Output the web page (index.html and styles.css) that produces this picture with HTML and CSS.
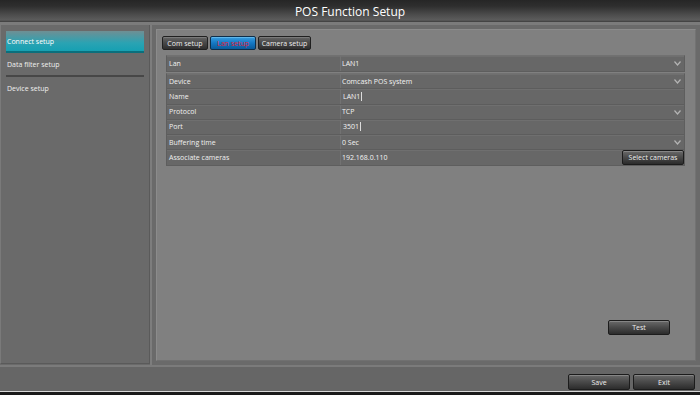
FILE: index.html
```html
<!DOCTYPE html>
<html>
<head>
<meta charset="utf-8">
<link rel="stylesheet" href="styles.css">
</head>
<body>
<div class="screen">
  <header class="titlebar">POS Function Setup</header>
  <div class="main">
    <aside class="sidebar">
      <div class="nav-item active">Connect setup</div>
      <div class="nav-item">Data filter setup</div>
      <div class="nav-sep"></div>
      <div class="nav-item">Device setup</div>
    </aside>
    <div class="divider"></div>
    <section class="panel">
      <div class="tabs">
        <div class="tab">Com setup</div>
        <div class="tab active">Lan setup</div>
        <div class="tab">Camera setup</div>
      </div>
      <div class="table table-single">
        <div class="row">
          <div class="label">Lan</div>
          <div class="value">LAN1<svg class="chev" viewBox="0 0 7 5"><path d="M0.5 0.5 L3.5 4 L6.5 0.5"/></svg></div>
        </div>
      </div>
      <div class="table">
        <div class="row">
          <div class="label">Device</div>
          <div class="value">Comcash POS system<svg class="chev" viewBox="0 0 7 5"><path d="M0.5 0.5 L3.5 4 L6.5 0.5"/></svg></div>
        </div>
        <div class="row">
          <div class="label">Name</div>
          <div class="value input">LAN1<span class="caret"></span></div>
        </div>
        <div class="row">
          <div class="label">Protocol</div>
          <div class="value">TCP<svg class="chev" viewBox="0 0 7 5"><path d="M0.5 0.5 L3.5 4 L6.5 0.5"/></svg></div>
        </div>
        <div class="row">
          <div class="label">Port</div>
          <div class="value input">3501<span class="caret"></span></div>
        </div>
        <div class="row">
          <div class="label">Buffering time</div>
          <div class="value">0 Sec<svg class="chev" viewBox="0 0 7 5"><path d="M0.5 0.5 L3.5 4 L6.5 0.5"/></svg></div>
        </div>
        <div class="row">
          <div class="label">Associate cameras</div>
          <div class="value">192.168.0.110<button class="btn btn-select">Select cameras</button></div>
        </div>
      </div>
      <div class="test-row"><button class="btn btn-test">Test</button></div>
    </section>
  </div>
  <footer class="bottombar">
    <button class="btn btn-foot">Save</button>
    <button class="btn btn-foot">Exit</button>
  </footer>
  <div class="edge"></div>
</div>
</body>
</html>
```
FILE: styles.css
```css
* { box-sizing: border-box; }
html, body { margin: 0; padding: 0; background: #1a1a1a; }
body { font-family: "Open Sans", "DejaVu Sans", sans-serif; color: #f2f2f2; }

.screen {
  width: 700px;
  height: 395px;
  display: flex;
  flex-direction: column;
  background: #6a6a6a;
  overflow: hidden;
}

.titlebar {
  height: 25px;
  flex: none;
  display: flex;
  align-items: center;
  justify-content: center;
  padding-bottom: 3px;
  font-size: 12px;
  color: #ffffff;
  background: linear-gradient(#262626 0px, #2e2e2e 6px, #4a4a4a 14px, #5c5c5c 20px, #3c3c3c 22px, #7b7b7b 22px, #7b7b7b 25px);
}

.main {
  height: 340px;
  flex: none;
  display: flex;
}

.sidebar {
  width: 150px;
  flex: none;
  padding: 6px 5px 0 5px;
  background: #6a6a6a;
  border-left: 1px solid #7a7a7a;
  border-right: 1px solid #5a5a5a;
  border-bottom: 1px solid #5a5a5a;
  margin-bottom: 1px;
}

.nav-item {
  height: 22px;
  display: flex;
  align-items: center;
  padding-left: 1px;
  font-size: 7px;
  color: #f0f0f0;
}
.nav-item.active {
  background: linear-gradient(#6f8f94, #2aa3b3 60%, #16a0b2);
  border-bottom: 2px solid #0b6f7c;
  color: #ffffff;
}
.nav-sep {
  height: 2px;
  background: #474747;
}

.divider {
  width: 2px;
  flex: none;
  background: #7d7d7d;
  margin-right: 4px;
}

.panel {
  width: 540px;
  flex: none;
  margin: 4px 0 4px 0;
  background: #808080;
  border: 1px solid #8b8b8b;
  border-right-color: #737373;
  border-bottom-color: #707070;
  display: flex;
  flex-direction: column;
  padding: 6px 10px 0 5px;
}

.tabs {
  display: flex;
  gap: 2px;
  height: 14px;
  margin-bottom: 5px;
}
.tab {
  height: 14px;
  display: flex;
  align-items: center;
  justify-content: center;
  font-size: 7px;
  color: #eeeeee;
  border: 1px solid #202020;
  border-radius: 2px;
  background: linear-gradient(#666 0%, #4a4a4a 45%, #2e2e2e 100%);
  box-shadow: inset 0 1px 0 #7a7a7a;
}
.tab:nth-child(1) { width: 46px; }
.tab:nth-child(2) { width: 46px; }
.tab:nth-child(3) { width: 53px; }
.tab.active {
  color: #e2233b;
  background: linear-gradient(#3a9ee0 0%, #1478c4 50%, #0a5a9a 100%);
  box-shadow: inset 0 1px 0 #5fb6ea;
  border-color: #0e2e4a;
}

.table {
  margin-left: 4px;
  background: #676767;
  border: 1px solid #5e5e5e;
  border-top-color: #717171;
}
.table-single { margin-bottom: 1px; }

.row {
  height: 15.2px;
  display: grid;
  grid-template-columns: 174px 1fr;
  font-size: 7px;
  border-bottom: 1px solid #5d5d5d;
  box-shadow: inset 0 1px 0 #6f6f6f;
}
.row:last-child { border-bottom: none; }

.label {
  display: flex;
  align-items: center;
  padding-left: 2px;
  color: #f0f0f0;
  border-right: 1px solid #727272;
}
.value {
  position: relative;
  display: flex;
  align-items: center;
  padding-left: 1px;
  color: #f4f4f4;
}
.value.input { padding-left: 2px; }

.caret {
  display: inline-block;
  width: 1px;
  height: 9px;
  margin-left: 1px;
  background: #dcdcdc;
}

.chev {
  position: absolute;
  right: 3px;
  top: 5px;
  width: 7px;
  height: 5px;
  fill: none;
  stroke: #b4b4b4;
  stroke-width: 1.2;
}

.btn {
  font-family: "Open Sans", "DejaVu Sans", sans-serif;
  font-size: 7px;
  color: #eeeeee;
  border: 1px solid #1c1c1c;
  border-radius: 2px;
  background: linear-gradient(#6a6a6a 0%, #4c4c4c 45%, #2c2c2c 100%);
  box-shadow: inset 0 1px 0 #858585;
  padding: 0;
  display: flex;
  align-items: center;
  justify-content: center;
}

.btn-select {
  position: absolute;
  right: 0;
  top: 0;
  width: 62px;
  height: 15px;
}

.test-row {
  margin-top: auto;
  display: flex;
  justify-content: flex-end;
  padding-right: 15px;
  padding-bottom: 25px;
}
.btn-test { width: 62px; height: 15px; }

.bottombar {
  height: 26px;
  flex: none;
  display: flex;
  justify-content: flex-end;
  align-items: flex-start;
  gap: 3px;
  padding: 7px 5px 0 0;
  background: #666666;
  border-top: 2px solid #7b7b7b;
}
.btn-foot { width: 62px; height: 16px; }

.edge {
  height: 4px;
  flex: none;
  background: linear-gradient(#d8d8d8 0px, #d8d8d8 1px, #1a1a1a 1px);
}
```
